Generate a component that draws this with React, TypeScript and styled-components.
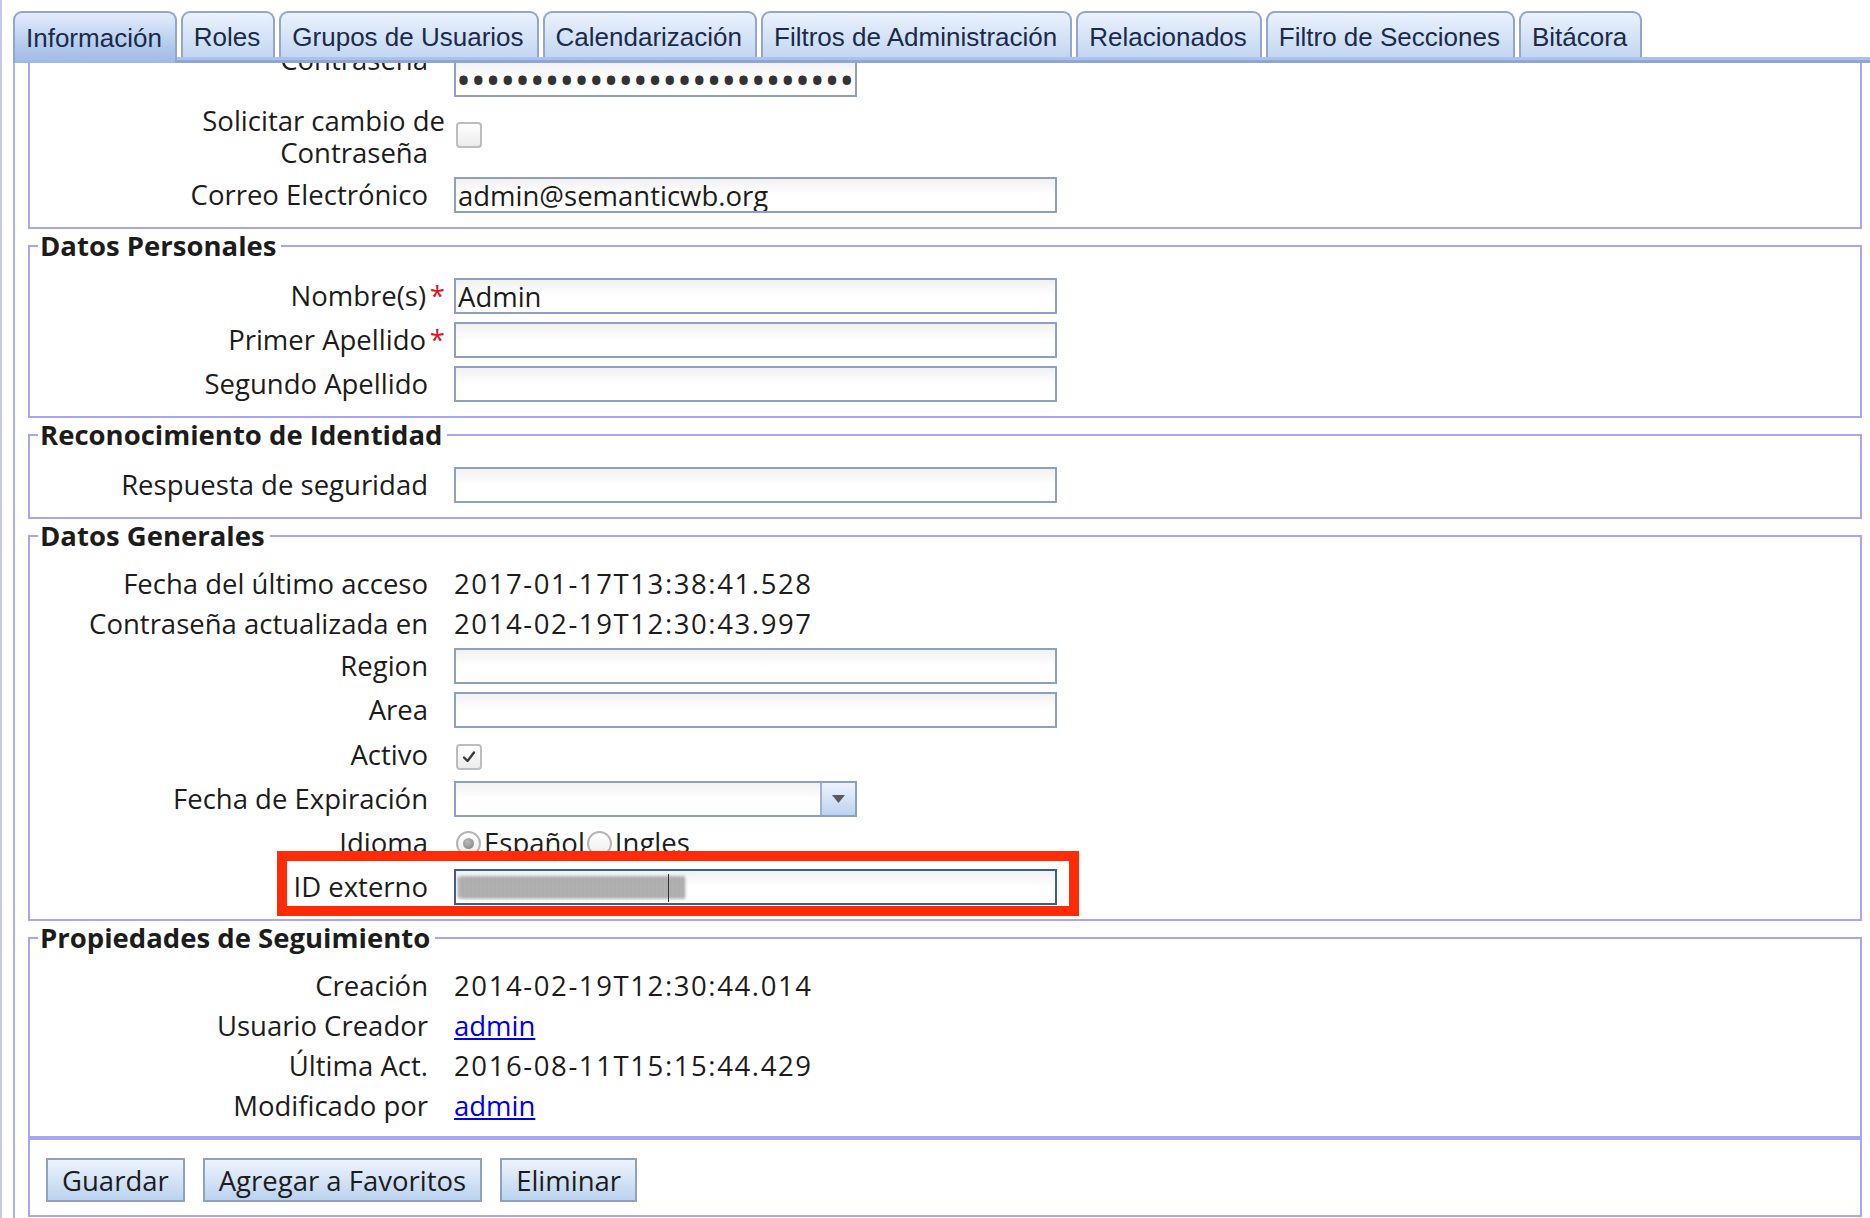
import React from "react";
import styled, { createGlobalStyle, css } from "styled-components";

const GlobalStyle = createGlobalStyle`
  html, body {
    margin: 0;
    padding: 0;
    background: #fff;
  }
  body {
    font-family: "Open Sans", "Liberation Sans", sans-serif;
    font-size: 27.5px;
    color: #1c1c1c;
  }
`;

const Page = styled.div`
  height: 1218px;
  box-sizing: border-box;
  border-left: 2px solid #c6c9ec;
  padding: 11px 0 0 11px;
  display: flex;
  flex-direction: column;
  overflow: hidden;
`;

const TabRow = styled.div`
  display: flex;
  gap: 4px;
  height: 46px;
  position: relative;
  z-index: 1;
`;

interface TabProps {
  $active?: boolean;
}
const Tab = styled.div<TabProps>`
  box-sizing: border-box;
  height: 46px;
  padding: 4px 13px 0 11px;
  display: flex;
  align-items: center;
  font-family: "Liberation Sans", Arial, sans-serif;
  font-size: 26px;
  color: #1b2a4a;
  border: 2px solid #93a7c9;
  border-bottom: none;
  border-radius: 9px 9px 0 0;
  background: linear-gradient(#ebf1fd, #c2d7f1);
  white-space: nowrap;
  ${p =>
    p.$active &&
    css`
      height: 52px;
      padding-top: 0;
      background: linear-gradient(#e4ecfb 0%, #b6cdee 60%, #9fb8e6 100%);
    `}
`;

const TabBar = styled.div`
  height: 6px;
  background: linear-gradient(#abc1ec 0%, #abc1ec 50%, #8ea6d7 50%, #8ea6d7 100%);
`;

const Panel = styled.div`
  flex: 1;
  border-left: 2px solid #aeaef2;
  padding: 0 8px 0 13px;
  overflow: hidden;
`;

const Scrolled = styled.div`
  margin-top: -95px;
`;

const Group = styled.fieldset`
  margin: 0;
  min-width: 0;
  border: 2px solid #a6a6f6;
  padding: 15px 12px 14px;
`;

const Legend = styled.legend`
  font-weight: 700;
  line-height: 34px;
  padding: 0 5px 0 2px;
  margin-left: -4px;
`;

const Rows = styled.div`
  display: flex;
  flex-direction: column;
  gap: 8px;
`;

const Row = styled.div<{ $tall?: boolean }>`
  display: grid;
  grid-template-columns: 403px 1fr;
  column-gap: 9px;
  align-items: center;
  min-height: ${p => (p.$tall ? 36 : 32)}px;
  position: relative;
`;

const Label = styled.div<{ $top?: boolean }>`
  text-align: right;
  line-height: 32px;
  ${p =>
    p.$top &&
    css`
      align-self: start;
      margin-top: -17px;
    `}
`;

const Mark = styled.span<{ $req?: boolean }>`
  display: inline-block;
  width: ${p => (p.$req ? 19 : 17)}px;
  text-align: right;
  color: #e3121b;
`;

const Value = styled.div<{ $stamp?: boolean }>`
  line-height: 32px;
  ${p =>
    p.$stamp &&
    css`
      letter-spacing: 1.6px;
    `}
`;

const UserLink = styled.a`
  color: #0000ee;
  text-decoration: underline;
`;

const boxLook = css`
  box-sizing: border-box;
  height: 36px;
  border: 2px solid #8da0bf;
  background: linear-gradient(#f1f1f1, #fff 50%);
`;

const TextInput = styled.input<{ $w?: number }>`
  ${boxLook};
  width: ${p => p.$w ?? 603}px;
  margin: 0;
  padding: 0 2px;
  font: inherit;
  color: #1c1c1c;
  outline: none;
`;

const PasswordInput = styled(TextInput)`
  font-size: 40px;
  letter-spacing: -0.3px;
  color: #333;
  padding-left: 0;
`;

const Combo = styled.div`
  ${boxLook};
  width: 403px;
  display: flex;
`;

const ComboButton = styled.div`
  margin-left: auto;
  width: 33px;
  border-left: 2px solid #9fb2d0;
  background: linear-gradient(#edf3fd, #bcd3ef);
  display: flex;
  align-items: center;
  justify-content: center;
`;

const IdBox = styled.div`
  ${boxLook};
  width: 603px;
  border-color: #3d5e92;
  position: relative;
`;

const Smudge = styled.span`
  position: absolute;
  left: 2px;
  top: 5px;
  width: 228px;
  height: 23px;
  border-radius: 3px;
  background: repeating-linear-gradient(90deg, #6a6a6a 0 2px, #cfcfcf 2px 4px);
  filter: blur(1.4px);
  opacity: 0.8;
`;

const Caret = styled.span`
  position: absolute;
  left: 212px;
  top: 3px;
  width: 1px;
  height: 28px;
  background: #333;
`;

const Highlight = styled.div`
  position: absolute;
  left: 235px;
  top: -18px;
  width: 802px;
  height: 65px;
  box-sizing: border-box;
  border: 10px solid #ff2a06;
  pointer-events: none;
`;

const Check = styled.span`
  box-sizing: border-box;
  width: 26px;
  height: 26px;
  margin-left: 2px;
  border: 2px solid #bdbdbd;
  border-radius: 4px;
  background: linear-gradient(#fff, #ececec);
  display: inline-flex;
  align-items: center;
  justify-content: center;
`;

const RadioGroup = styled.div`
  display: flex;
  align-items: center;
  line-height: 32px;
`;

const Radio = styled.span<{ $on?: boolean }>`
  box-sizing: border-box;
  width: 25px;
  height: 25px;
  margin: 0 3px 0 2px;
  border-radius: 50%;
  border: 2px solid #b4b4b4;
  background: linear-gradient(#fff, #ededed);
  display: inline-flex;
  align-items: center;
  justify-content: center;
  ${p =>
    p.$on &&
    css`
      &::after {
        content: "";
        width: 11px;
        height: 11px;
        border-radius: 50%;
        background: radial-gradient(circle at 40% 35%, #bcbcbc, #7d7d7d);
      }
    `}
`;

const Actions = styled.div`
  border: 2px solid #a6a6f6;
  padding: 18px 16px 13px;
  display: flex;
  gap: 18px;
`;

const Button = styled.button`
  height: 44px;
  padding: 0 14px;
  border: 2px solid #8fa1bd;
  background: linear-gradient(#eef3fd, #bad3ef);
  font: inherit;
  color: #1c1c1c;
`;

const tabs = [
  "Información",
  "Roles",
  "Grupos de Usuarios",
  "Calendarización",
  "Filtros de Administración",
  "Relacionados",
  "Filtro de Secciones",
  "Bitácora"
];

function Tick() {
  return (
    <svg width="16" height="16" viewBox="0 0 16 16">
      <path
        d="M3 8.5 L6.5 12 L13 3.5"
        fill="none"
        stroke="#3a3a3a"
        strokeWidth="2.4"
        strokeLinecap="round"
        strokeLinejoin="round"
      />
    </svg>
  );
}

function App() {
  return (
    <Page>
      <GlobalStyle />
      <TabRow>
        {tabs.map((t, i) => (
          <Tab key={t} $active={i === 0}>
            {t}
          </Tab>
        ))}
      </TabRow>
      <TabBar />
      <Panel>
        <Scrolled>
          <Group>
            <Legend>Datos de Acceso</Legend>
            <Rows>
              <Row>
                <Label>
                  Usuario<Mark />
                </Label>
                <TextInput readOnly value="admin" />
              </Row>
              <Row>
                <Label $top>
                  Contraseña<Mark />
                </Label>
                <PasswordInput type="password" readOnly $w={403} value="adminadminadminadminadminadmin" />
              </Row>
              <Row>
                <Label>
                  Solicitar cambio de
                  <br />
                  Contraseña<Mark />
                </Label>
                <div>
                  <Check />
                </div>
              </Row>
              <Row>
                <Label>
                  Correo Electrónico<Mark />
                </Label>
                <TextInput readOnly value="admin@semanticwb.org" />
              </Row>
            </Rows>
          </Group>

          <Group>
            <Legend>Datos Personales</Legend>
            <Rows>
              <Row>
                <Label>
                  Nombre(s)<Mark $req>*</Mark>
                </Label>
                <TextInput readOnly value="Admin" />
              </Row>
              <Row>
                <Label>
                  Primer Apellido<Mark $req>*</Mark>
                </Label>
                <TextInput readOnly value="" />
              </Row>
              <Row>
                <Label>
                  Segundo Apellido<Mark />
                </Label>
                <TextInput readOnly value="" />
              </Row>
            </Rows>
          </Group>

          <Group>
            <Legend>Reconocimiento de Identidad</Legend>
            <Rows>
              <Row>
                <Label>
                  Respuesta de seguridad<Mark />
                </Label>
                <TextInput readOnly value="" />
              </Row>
            </Rows>
          </Group>

          <Group>
            <Legend>Datos Generales</Legend>
            <Rows>
              <Row>
                <Label>
                  Fecha del último acceso<Mark />
                </Label>
                <Value $stamp>2017-01-17T13:38:41.528</Value>
              </Row>
              <Row>
                <Label>
                  Contraseña actualizada en<Mark />
                </Label>
                <Value $stamp>2014-02-19T12:30:43.997</Value>
              </Row>
              <Row>
                <Label>
                  Region<Mark />
                </Label>
                <TextInput readOnly value="" />
              </Row>
              <Row>
                <Label>
                  Area<Mark />
                </Label>
                <TextInput readOnly value="" />
              </Row>
              <Row $tall>
                <Label>
                  Activo<Mark />
                </Label>
                <div>
                  <Check>
                    <Tick />
                  </Check>
                </div>
              </Row>
              <Row>
                <Label>
                  Fecha de Expiración<Mark />
                </Label>
                <Combo>
                  <ComboButton>
                    <svg width="13" height="8" viewBox="0 0 13 8">
                      <path d="M0 0 H13 L6.5 8 Z" fill="#5a5a5a" />
                    </svg>
                  </ComboButton>
                </Combo>
              </Row>
              <Row $tall>
                <Label>
                  Idioma<Mark />
                </Label>
                <RadioGroup>
                  <Radio $on />
                  Español
                  <Radio />
                  Ingles
                </RadioGroup>
              </Row>
              <Row>
                <Highlight />
                <Label>
                  ID externo<Mark />
                </Label>
                <IdBox>
                  <Smudge />
                  <Caret />
                </IdBox>
              </Row>
            </Rows>
          </Group>

          <Group>
            <Legend>Propiedades de Seguimiento</Legend>
            <Rows>
              <Row>
                <Label>
                  Creación<Mark />
                </Label>
                <Value $stamp>2014-02-19T12:30:44.014</Value>
              </Row>
              <Row>
                <Label>
                  Usuario Creador<Mark />
                </Label>
                <Value>
                  <UserLink href="#">admin</UserLink>
                </Value>
              </Row>
              <Row>
                <Label>
                  Última Act.<Mark />
                </Label>
                <Value $stamp>2016-08-11T15:15:44.429</Value>
              </Row>
              <Row>
                <Label>
                  Modificado por<Mark />
                </Label>
                <Value>
                  <UserLink href="#">admin</UserLink>
                </Value>
              </Row>
            </Rows>
          </Group>

          <Actions>
            <Button>Guardar</Button>
            <Button>Agregar a Favoritos</Button>
            <Button>Eliminar</Button>
          </Actions>
        </Scrolled>
      </Panel>
    </Page>
  );
}

export default App;
